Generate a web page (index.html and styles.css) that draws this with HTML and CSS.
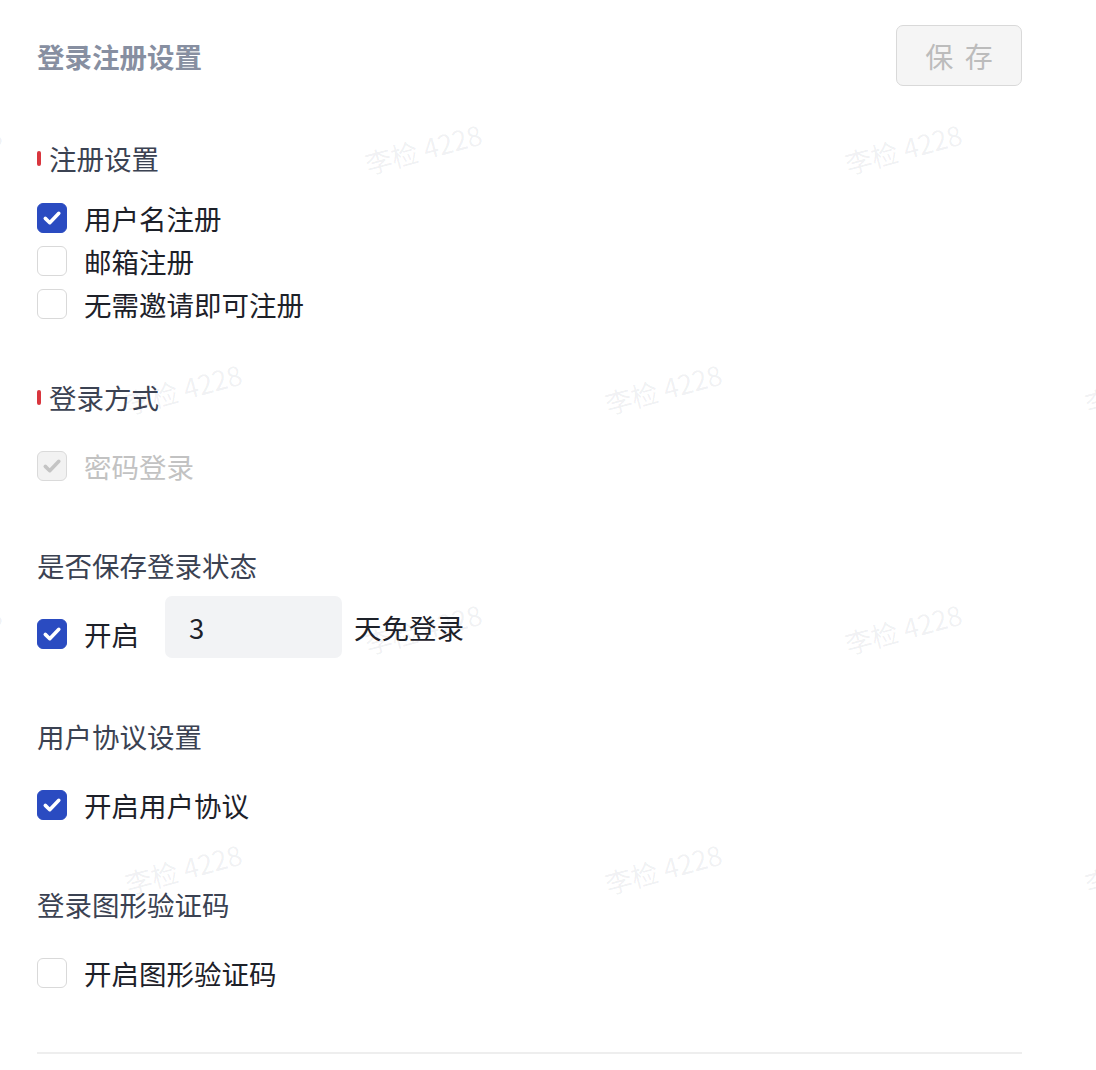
FILE: index.html
```html
<!DOCTYPE html>
<html lang="zh-CN">
<head>
    <meta charset="UTF-8">
    <meta name="viewport" content="width=device-width, initial-scale=1.0">
    <title>登录注册设置</title>
    <link rel="stylesheet" href="styles.css">
</head>
<body>
    <div class="page">
        <div class="settings">
            <div class="header">
                <h2 class="page-title">登录注册设置</h2>
                <button class="btn-save" disabled>保 存</button>
            </div>

            <div class="section first">
                <div class="field-title marked">注册设置</div>
                <div class="check-group">
                    <label class="check-row">
                        <span class="box checked">
                            <svg viewBox="0 0 30 30"><path d="M7.8 15.4 L12.6 20 L22.3 10"/></svg>
                        </span>
                        <span>用户名注册</span>
                    </label>
                    <label class="check-row">
                        <span class="box"></span>
                        <span>邮箱注册</span>
                    </label>
                    <label class="check-row">
                        <span class="box"></span>
                        <span>无需邀请即可注册</span>
                    </label>
                </div>
            </div>

            <div class="section tight">
                <div class="field-title marked">登录方式</div>
                <div class="check-list">
                    <label class="check-row disabled">
                        <span class="box">
                            <svg viewBox="0 0 30 30"><path d="M7.8 15.4 L12.6 20 L22.3 10"/></svg>
                        </span>
                        <span>密码登录</span>
                    </label>
                </div>
            </div>

            <div class="section">
                <div class="field-title">是否保存登录状态</div>
                <div class="inline-row">
                    <label class="check-row shifted">
                        <span class="box checked">
                            <svg viewBox="0 0 30 30"><path d="M7.8 15.4 L12.6 20 L22.3 10"/></svg>
                        </span>
                        <span>开启</span>
                    </label>
                    <input class="days-input" type="text" value="3">
                    <span>天免登录</span>
                </div>
            </div>

            <div class="section">
                <div class="field-title">用户协议设置</div>
                <div class="check-list">
                    <label class="check-row">
                        <span class="box checked">
                            <svg viewBox="0 0 30 30"><path d="M7.8 15.4 L12.6 20 L22.3 10"/></svg>
                        </span>
                        <span>开启用户协议</span>
                    </label>
                </div>
            </div>

            <div class="section">
                <div class="field-title">登录图形验证码</div>
                <div class="check-list">
                    <label class="check-row">
                        <span class="box"></span>
                        <span>开启图形验证码</span>
                    </label>
                </div>
            </div>

            <div class="divider"></div>
        </div>

        <div class="watermarks">
            <div class="wm-row">
                <span class="wm">李检 4228</span><span class="wm">李检 4228</span><span class="wm">李检 4228</span>
            </div>
            <div class="wm-row odd">
                <span class="wm">李检 4228</span><span class="wm">李检 4228</span><span class="wm">李检 4228</span>
            </div>
            <div class="wm-row">
                <span class="wm">李检 4228</span><span class="wm">李检 4228</span><span class="wm">李检 4228</span>
            </div>
            <div class="wm-row odd">
                <span class="wm">李检 4228</span><span class="wm">李检 4228</span><span class="wm">李检 4228</span>
            </div>
        </div>
    </div>
</body>
</html>
```

FILE: styles.css
```css
* {
    box-sizing: border-box;
}
body {
    margin: 0;
    font-family: "Noto Sans CJK SC", "Noto Sans", sans-serif;
    font-size: 27.5px;
    color: #1d2129;
    background: #fff;
}
.page {
    position: relative;
    min-height: 100vh;
    overflow: hidden;
}
.settings {
    width: 985px;
    margin-left: 37px;
}
.header {
    display: flex;
    justify-content: space-between;
    align-items: center;
    padding-top: 25px;
}
.page-title {
    margin: 0;
    font-size: 27.5px;
    font-weight: bold;
    color: #878fa1;
    line-height: 40px;
}
.btn-save {
    width: 126px;
    height: 61px;
    font-family: inherit;
    font-size: 28px;
    word-spacing: 5px;
    color: #bcbcbc;
    background: #f5f5f5;
    border: 1.5px solid #d9d9d9;
    border-radius: 7px;
    padding: 0;
}
.section {
    margin-top: 58px;
}
.section.first {
    margin-top: 52px;
}
.section.tight {
    margin-top: 52px;
}
.field-title {
    line-height: 40px;
    color: #3b4252;
    margin-bottom: 27px;
}
.field-title.marked {
    display: flex;
    align-items: center;
    gap: 8px;
}
.field-title.marked::before {
    content: "";
    width: 4px;
    height: 15px;
    border-radius: 2px;
    background: #d9363e;
}
.section.first .field-title {
    margin-bottom: 18px;
}
.check-row {
    display: flex;
    align-items: center;
    gap: 17px;
    height: 43px;
}
.box {
    width: 30px;
    height: 30px;
    border: 1.5px solid #d9d9d9;
    border-radius: 6px;
    background: #fff;
    display: flex;
    align-items: center;
    justify-content: center;
    flex-shrink: 0;
}
.box svg {
    width: 30px;
    height: 30px;
}
.box path {
    fill: none;
    stroke: #fff;
    stroke-width: 3.8;
    stroke-linecap: round;
    stroke-linejoin: round;
}
.box.checked {
    background: #2a4bc1;
    border-color: #2a4bc1;
}
.check-row.disabled {
    color: #c2c2c2;
}
.check-row.disabled .box {
    background: #f2f2f2;
    border-color: #dadada;
}
.check-row.disabled .box path {
    stroke: #c4c4c4;
}
.field-title + .inline-row {
    margin-top: -16px;
}
.inline-row {
    display: flex;
    align-items: center;
    height: 62px;
}
.check-row.shifted {
    margin-top: 14px;
}
.days-input {
    width: 177px;
    height: 62px;
    margin-left: 26px;
    margin-right: 12px;
    padding: 0 0 0 24px;
    border: none;
    border-radius: 7px;
    background: #f2f3f5;
    font-family: inherit;
    font-size: 27.5px;
    color: #1d2129;
}
.divider {
    margin-top: 58px;
    height: 2px;
    background: #eeeeee;
}
.watermarks {
    position: absolute;
    top: 28px;
    left: -297px;
    pointer-events: none;
}
.wm-row {
    display: flex;
    height: 240px;
}
.wm-row.odd {
    padding-left: 240px;
}
.wm {
    width: 480px;
    height: 240px;
    display: flex;
    align-items: center;
    justify-content: center;
    font-size: 27px;
    color: rgba(40, 60, 80, 0.07);
    transform: rotate(-15deg);
    white-space: nowrap;
}
```
